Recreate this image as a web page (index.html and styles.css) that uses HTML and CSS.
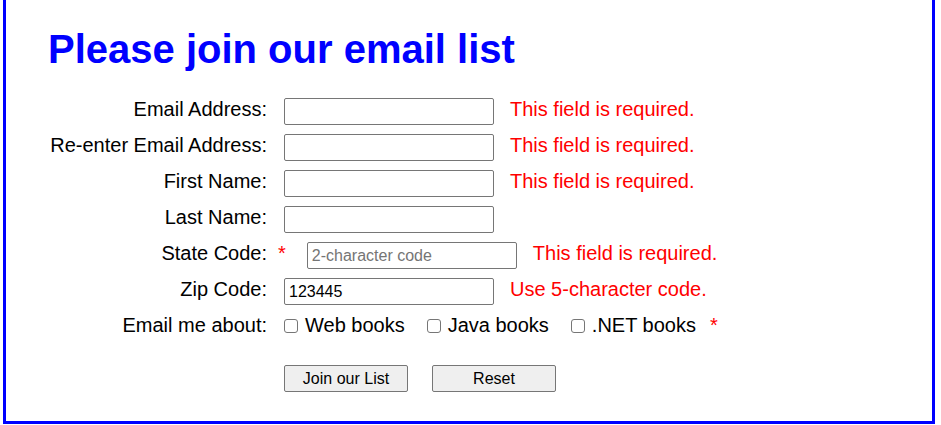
FILE: index.html
```html
<!DOCTYPE html>
<html lang="en">
<head>
<meta charset="utf-8">
<title>Email list</title>
<link rel="stylesheet" href="styles.css">
</head>
<body>
<main class="page">
  <h1 class="title">Please join our email list</h1>
  <form class="form">
    <div class="row">
      <label class="label">Email Address:</label>
      <input class="field" type="text">
      <span class="error">This field is required.</span>
    </div>
    <div class="row">
      <label class="label">Re-enter Email Address:</label>
      <input class="field" type="text">
      <span class="error">This field is required.</span>
    </div>
    <div class="row">
      <label class="label">First Name:</label>
      <input class="field" type="text">
      <span class="error">This field is required.</span>
    </div>
    <div class="row">
      <label class="label">Last Name:</label>
      <input class="field" type="text">
    </div>
    <div class="row">
      <label class="label label-star">State Code:</label>
      <span class="star">*</span>
      <input class="field field-state" type="text" placeholder="2-character code">
      <span class="error">This field is required.</span>
    </div>
    <div class="row">
      <label class="label">Zip Code:</label>
      <input class="field" type="text" value="123445">
      <span class="error">Use 5-character code.</span>
    </div>
    <div class="row row-checks">
      <label class="label">Email me about:</label>
      <div class="checks">
        <label class="check"><input type="checkbox" class="box">Web books</label>
        <label class="check"><input type="checkbox" class="box">Java books</label>
        <label class="check"><input type="checkbox" class="box">.NET books</label>
        <span class="star star-end">*</span>
      </div>
    </div>
    <div class="buttons">
      <button type="button" class="btn">Join our List</button>
      <button type="reset" class="btn">Reset</button>
    </div>
  </form>
</main>
</body>
</html>
```

FILE: styles.css
```css
html, body {
  margin: 0;
  padding: 0;
  background: #ffffff;
}

body {
  font-family: "Liberation Sans", Arial, sans-serif;
  font-size: 20px;
  color: #000000;
}

.page {
  box-sizing: border-box;
  width: 932px;
  height: 424px;
  margin-left: 3px;
  padding: 26px 0 0 40px;
  border-left: 3px solid #0000ff;
  border-right: 3px solid #0000ff;
  border-bottom: 3px solid #0000ff;
}

.title {
  margin: 0 0 0 2px;
  font-size: 40px;
  line-height: 46px;
  font-weight: bold;
  color: #0000ff;
}

.form {
  margin-top: 26px;
}

.row {
  display: flex;
  align-items: flex-start;
  height: 27px;
  margin-bottom: 9px;
}

.label {
  box-sizing: border-box;
  width: 221px;
  text-align: right;
  line-height: 22px;
  flex-shrink: 0;
  margin-right: 17px;
}

.label-star {
  margin-right: 11px;
}

.star {
  color: #ff0000;
  line-height: 22px;
}

.field {
  box-sizing: border-box;
  width: 210px;
  height: 27px;
  margin: 0;
  padding: 1px 4px 0;
  border: 1px solid #767676;
  border-radius: 2px;
  font-family: "Liberation Sans", Arial, sans-serif;
  font-size: 16px;
  color: #000000;
  background: #ffffff;
}

.field::placeholder {
  color: #757575;
}

.field-state {
  margin-left: 21px;
}

.error {
  margin-left: 16px;
  color: #ff0000;
  line-height: 23px;
  white-space: nowrap;
}

.row-checks {
  height: 26px;
  margin-bottom: 25px;
}

.checks {
  display: flex;
  align-items: flex-start;
  line-height: 22px;
}

.check {
  display: flex;
  align-items: flex-start;
  margin-right: 22px;
  white-space: nowrap;
}

.check:nth-child(3) {
  margin-right: 14px;
}

.box {
  appearance: none;
  -webkit-appearance: none;
  box-sizing: border-box;
  width: 14px;
  height: 14px;
  margin: 5px 7px 0 0;
  border: 1px solid #767676;
  border-radius: 3px;
  background: #ffffff;
}

.star-end {
  line-height: 22px;
}

.buttons {
  display: flex;
  gap: 24px;
  padding-left: 238px;
}

.btn {
  box-sizing: border-box;
  width: 124px;
  height: 27px;
  margin: 0;
  padding: 0;
  border: 1px solid #767676;
  border-radius: 2px;
  background: #efefef;
  font-family: "Liberation Sans", Arial, sans-serif;
  font-size: 16px;
  color: #000000;
}
```
